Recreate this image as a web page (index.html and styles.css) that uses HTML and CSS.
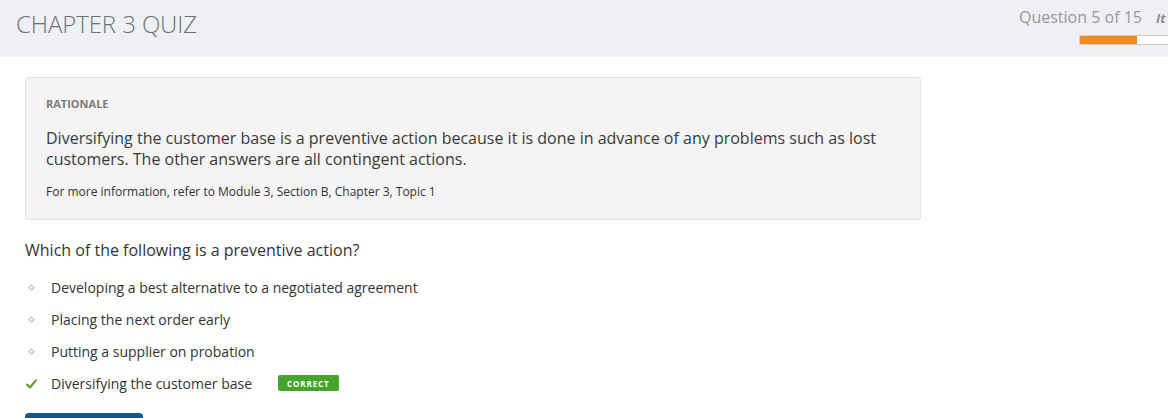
FILE: index.html
```html
<!DOCTYPE html>
<html>
<head>
<meta charset="utf-8">
<link rel="stylesheet" href="styles.css">
</head>
<body>
<header class="topbar">
  <h1 class="title">CHAPTER 3 QUIZ</h1>
  <div class="progress-area">
    <div class="progress-info">
      <span class="counter">Question 5 of 15</span>
      <span class="item-label">It</span>
    </div>
    <div class="progress-bar"><div class="progress-fill" style="width:57px"></div></div>
  </div>
</header>
<main class="content">
  <section class="rationale">
    <div class="rationale-label">RATIONALE</div>
    <p class="rationale-text">Diversifying the customer base is a preventive action because it is done in advance of any problems such as lost customers. The other answers are all contingent actions.</p>
    <p class="rationale-ref">For more information, refer to Module 3, Section B, Chapter 3, Topic 1</p>
  </section>
  <h2 class="question">Which of the following is a preventive action?</h2>
  <ul class="options">
    <li class="option"><span class="marker"><svg width="7" height="7" viewBox="0 0 7 7"><path d="M3.5 0 L7 3.5 L3.5 7 L0 3.5 Z M3.5 2 L2 3.5 L3.5 5 L5 3.5 Z" fill="#c9c9c9" fill-rule="evenodd"/></svg></span><span class="opt-text">Developing a best alternative to a negotiated agreement</span></li>
    <li class="option"><span class="marker"><svg width="7" height="7" viewBox="0 0 7 7"><path d="M3.5 0 L7 3.5 L3.5 7 L0 3.5 Z M3.5 2 L2 3.5 L3.5 5 L5 3.5 Z" fill="#c9c9c9" fill-rule="evenodd"/></svg></span><span class="opt-text">Placing the next order early</span></li>
    <li class="option"><span class="marker"><svg width="7" height="7" viewBox="0 0 7 7"><path d="M3.5 0 L7 3.5 L3.5 7 L0 3.5 Z M3.5 2 L2 3.5 L3.5 5 L5 3.5 Z" fill="#c9c9c9" fill-rule="evenodd"/></svg></span><span class="opt-text">Putting a supplier on probation</span></li>
    <li class="option"><span class="marker check"><svg width="11" height="10" viewBox="0 0 11 10"><path d="M1 5.5 L4 8.5 L10 1.2" fill="none" stroke="#5a9e2a" stroke-width="2" stroke-linecap="round" stroke-linejoin="round"/></svg></span><span class="opt-text">Diversifying the customer base</span><span class="badge">CORRECT</span></li>
  </ul>
  <div class="actions"><button class="btn-next" aria-label="Next"></button></div>
</main>
</body>
</html>
```
FILE: styles.css
```css
* { box-sizing: border-box; }
html, body { margin: 0; padding: 0; }
body {
  font-family: "Open Sans", "Liberation Sans", sans-serif;
  background: #fff;
  color: #333;
  width: 1168px;
  height: 418px;
  overflow: hidden;
}
.topbar {
  height: 57px;
  background: #eff0f3;
  display: flex;
  justify-content: space-between;
  align-items: flex-start;
  padding-left: 16px;
  overflow: hidden;
}
.title {
  margin: 7px 0 0 0;
  font-size: 24px;
  font-weight: 300;
  color: #6c727c;
  line-height: 33px;
  letter-spacing: -0.1px;
}
.progress-area {
  display: flex;
  flex-direction: column;
  align-items: flex-start;
  padding-top: 5px;
  width: 149px;
  flex-shrink: 0;
}
.progress-info {
  display: flex;
  align-items: baseline;
  white-space: nowrap;
}
.counter {
  font-size: 16px;
  color: #999;
  line-height: 24px;
}
.item-label {
  font-size: 13px;
  font-style: italic;
  font-weight: 700;
  color: #8a8f99;
  margin-left: 14px;
}
.progress-bar {
  margin-top: 6px;
  margin-left: 60px;
  width: 100px;
  height: 10px;
  background: #fff;
  border: 1px solid #cfcfcf;
  border-radius: 2px;
  overflow: hidden;
  flex-shrink: 0;
}
.progress-fill {
  height: 100%;
  background: #f0891f;
}
.content {
  padding: 20px 25px 0 25px;
}
.rationale {
  width: 896px;
  background: #f4f4f4;
  border: 1px solid #e2e2e2;
  border-radius: 3px;
  padding: 19px 20px 19px 20px;
}
.rationale-label {
  font-size: 11px;
  font-weight: 700;
  color: #7b7b7b;
  line-height: 14px;
}
.rationale-text {
  margin: 17px 0 0 0;
  font-size: 16px;
  line-height: 21px;
  color: #3a3a3a;
}
.rationale-ref {
  margin: 14px 0 0 0;
  font-size: 12px;
  line-height: 16px;
  color: #333;
}
.question {
  margin: 19px 0 0 0;
  font-size: 16px;
  font-weight: 400;
  line-height: 22px;
  color: #333;
}
.options {
  list-style: none;
  margin: 16px 0 0 0;
  padding: 0;
  display: flex;
  flex-direction: column;
  gap: 12px;
}
.option {
  display: flex;
  align-items: center;
  height: 20px;
  font-size: 14px;
  color: #333;
}
.marker {
  width: 26px;
  display: flex;
  align-items: center;
  padding-left: 3px;
}
.marker.check { padding-left: 1px; padding-top: 2px; }
.badge {
  margin-left: 26px;
  background: #45a52b;
  color: #fff;
  font-size: 8px;
  font-weight: 700;
  letter-spacing: 0.9px;
  padding: 3px 9px 2px 9px;
  border-radius: 2px;
  line-height: 11px;
}
.actions {
  margin-top: 20px;
}
.btn-next {
  display: block;
  width: 118px;
  height: 36px;
  background: #0a5a98;
  border: none;
  border-radius: 4px;
}
```
